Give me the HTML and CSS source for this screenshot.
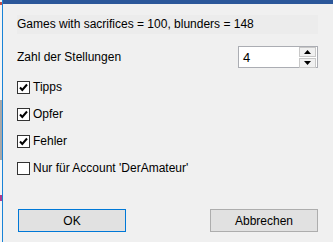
FILE: index.html
```html
<!DOCTYPE html>
<html lang="de">
<head>
    <meta charset="UTF-8">
    <title>Stellungen</title>
    <link rel="stylesheet" href="styles.css">
</head>
<body>
    <div class="screen">
        <div class="behind">
            <span class="mark mark-red"></span>
            <span class="mark mark-line"></span>
            <span class="mark mark-pink"></span>
        </div>
        <div class="window">
            <div class="titlebar"></div>
            <div class="dialog">
                <p class="summary">Games with sacrifices = 100, blunders = 148</p>

                <div class="row">
                    <span>Zahl der Stellungen</span>
                    <div class="spin">
                        <span class="spin-value">4</span>
                        <div class="spin-buttons">
                            <span class="spin-btn"><svg width="7" height="4" viewBox="0 0 7 4"><path d="M0 4 L3.5 0 L7 4 Z" fill="#000"/></svg></span>
                            <span class="spin-btn"><svg width="7" height="4" viewBox="0 0 7 4"><path d="M0 0 L7 0 L3.5 4 Z" fill="#000"/></svg></span>
                        </div>
                    </div>
                </div>

                <div class="checks">
                    <label class="check"><span class="box"><svg width="11" height="11" viewBox="0 0 11 11"><path d="M2 5.5 L4.3 8 L9 2.5" fill="none" stroke="#000" stroke-width="2"/></svg></span>Tipps</label>
                    <label class="check"><span class="box"><svg width="11" height="11" viewBox="0 0 11 11"><path d="M2 5.5 L4.3 8 L9 2.5" fill="none" stroke="#000" stroke-width="2"/></svg></span>Opfer</label>
                    <label class="check"><span class="box"><svg width="11" height="11" viewBox="0 0 11 11"><path d="M2 5.5 L4.3 8 L9 2.5" fill="none" stroke="#000" stroke-width="2"/></svg></span>Fehler</label>
                    <label class="check"><span class="box"></span>Nur für Account 'DerAmateur'</label>
                </div>

                <div class="buttons">
                    <button class="btn btn-default">OK</button>
                    <button class="btn">Abbrechen</button>
                </div>
            </div>
        </div>
    </div>
</body>
</html>
```

FILE: styles.css
```css
body {
    margin: 0;
    background-color: #f0f0f0;
    font-family: "Liberation Sans", Arial, sans-serif;
    font-size: 12px;
    color: #000;
}
.screen {
    display: flex;
    height: 242px;
    overflow: hidden;
}
.behind {
    width: 2px;
    background-color: #f4f4f4;
    border-right: 1px solid #1883d7;
    display: flex;
    flex-direction: column;
}
.mark {
    display: block;
    width: 2px;
}
.mark-red {
    height: 3px;
    margin-top: 2px;
    background-color: #c0504d;
}
.mark-line {
    height: 60px;
    margin-top: 95px;
    background-color: #a8a8a8;
}
.mark-pink {
    height: 6px;
    margin-top: 35px;
    background-color: #b03a8c;
}
.window {
    flex: 1;
    display: flex;
    flex-direction: column;
}
.titlebar {
    height: 4px;
    background-color: #2b579a;
}
.dialog {
    padding: 11px 15px 0 14px;
}
.summary {
    margin: 0;
    padding: 2px 0 2px 0;
    height: 15px;
    background-color: #ececec;
}
.row {
    display: flex;
    justify-content: space-between;
    align-items: center;
    margin-top: 12px;
    height: 22px;
}
.spin {
    width: 78px;
    height: 20px;
    border: 1px solid #abadb3;
    background-color: #fff;
    display: flex;
    align-items: center;
    justify-content: space-between;
}
.spin-value {
    padding-left: 4px;
    font-size: 13px;
}
.spin-buttons {
    display: flex;
    flex-direction: column;
    gap: 1px;
    padding-right: 1px;
}
.spin-btn {
    width: 15px;
    height: 8px;
    border: 1px solid #c8c8c8;
    background-color: #f0f0f0;
    display: flex;
    align-items: center;
    justify-content: center;
}
.checks {
    display: flex;
    flex-direction: column;
    gap: 13px;
    margin-top: 12px;
}
.check {
    display: flex;
    align-items: center;
    gap: 3px;
    height: 14px;
}
.box {
    width: 11px;
    height: 11px;
    border: 1px solid #333;
    background-color: #fff;
    display: flex;
}
.buttons {
    display: flex;
    justify-content: space-between;
    margin-top: 34px;
    padding-left: 1px;
}
.btn {
    width: 108px;
    height: 23px;
    font-family: inherit;
    font-size: 12px;
    background-color: #e1e1e1;
    border: 1px solid #adadad;
    padding: 0;
    color: #000;
}
.btn-default {
    border-color: #0078d7;
}
```
